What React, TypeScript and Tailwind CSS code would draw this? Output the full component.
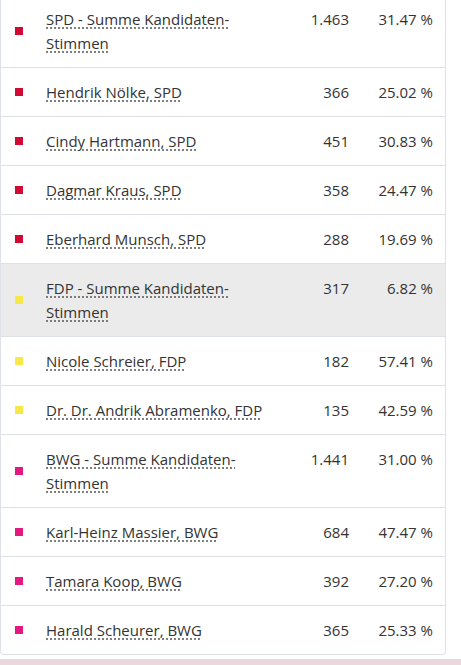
import React from "react";

type Row = { name: string[]; votes: string; pct: string; color: string; gray?: boolean };

const SPD = "#d10a33";
const FDP = "#f4e948";
const BWG = "#e3197f";

const rows: Row[] = [
  { name: ["SPD - Summe Kandidaten-", "Stimmen"], votes: "1.463", pct: "31.47 %", color: SPD },
  { name: ["Hendrik Nölke, SPD"], votes: "366", pct: "25.02 %", color: SPD },
  { name: ["Cindy Hartmann, SPD"], votes: "451", pct: "30.83 %", color: SPD },
  { name: ["Dagmar Kraus, SPD"], votes: "358", pct: "24.47 %", color: SPD },
  { name: ["Eberhard Munsch, SPD"], votes: "288", pct: "19.69 %", color: SPD },
  { name: ["FDP - Summe Kandidaten-", "Stimmen"], votes: "317", pct: "6.82 %", color: FDP, gray: true },
  { name: ["Nicole Schreier, FDP"], votes: "182", pct: "57.41 %", color: FDP },
  { name: ["Dr. Dr. Andrik Abramenko, FDP"], votes: "135", pct: "42.59 %", color: FDP },
  { name: ["BWG - Summe Kandidaten-", "Stimmen"], votes: "1.441", pct: "31.00 %", color: BWG },
  { name: ["Karl-Heinz Massier, BWG"], votes: "684", pct: "47.47 %", color: BWG },
  { name: ["Tamara Koop, BWG"], votes: "392", pct: "27.20 %", color: BWG },
  { name: ["Harald Scheurer, BWG"], votes: "365", pct: "25.33 %", color: BWG },
];

export default function App() {
  return (
    <div
      className="w-[461px] h-[665px] overflow-hidden bg-white text-[#333] flex flex-col"
      style={{ fontFamily: '"Open Sans", "Noto Sans", sans-serif' }}
    >
      <div className="w-[446px] -mt-[5px] border-x border-b border-[#dee2e6] rounded-b-[4px] bg-white">
        {rows.map((r, i) => (
          <div
            key={i}
            className={`flex items-stretch text-[15px] leading-6 ${i < rows.length - 1 ? "border-b border-[#dee2e6]" : ""} ${r.gray ? "bg-[#ebebeb]" : ""}`}
          >
            <div className="w-[45px] shrink-0 flex items-center pl-[14px]">
              <span className="block w-2 h-2" style={{ backgroundColor: r.color }} />
            </div>
            <div className="flex-1 py-3">
              {r.name.map((l, j) => (
                <div key={j}>
                  <span className="underline decoration-dotted decoration-[#555] underline-offset-[3px]">{l}</span>
                </div>
              ))}
            </div>
            <div className="w-[70px] py-3 text-right">{r.votes}</div>
            <div className="w-[96px] py-3 pr-[12px] text-right">{r.pct}</div>
          </div>
        ))}
      </div>
      <div className="mt-auto h-[6px] bg-[#ead8dc]" />
    </div>
  );
}
